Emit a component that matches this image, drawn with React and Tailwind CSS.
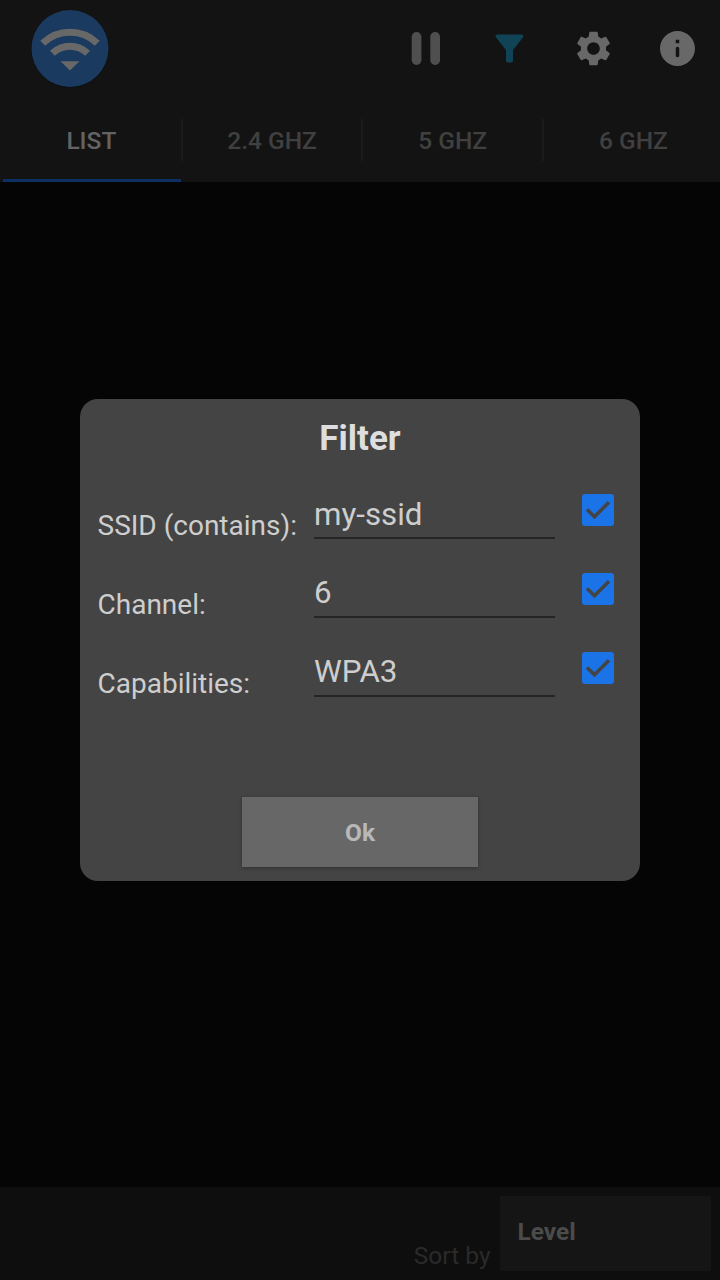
import { MdFilterAlt, MdSettings } from "react-icons/md";

const tabs = ["LIST", "2.4 GHZ", "5 GHZ", "6 GHZ"];
const fields = [
  { label: "SSID (contains):", value: "my-ssid" },
  { label: "Channel:", value: "6" },
  { label: "Capabilities:", value: "WPA3" },
];

function Logo() {
  return (
    <svg className="h-[78px] w-[78px]" viewBox="0 0 78 78">
      <circle cx="39" cy="39.5" r="38.8" fill="#0e1013" />
      <circle cx="39" cy="38.5" r="38.5" fill="#1b3a60" />
      <g fill="none" stroke="#686868" strokeWidth="7">
        <path d="M11.7 33.3a39.5 39.5 0 0 1 54.6 0" />
        <path d="M21.4 43.3a25.5 25.5 0 0 1 35.2 0" />
      </g>
      <path d="M29.5 51.2h19L39 60.5z" fill="#686868" />
    </svg>
  );
}

function Pause() {
  return (
    <svg className="h-[42px] w-[42px]" viewBox="0 0 42 42" fill="#4f4f4f">
      <rect x="6.7" y="4" width="9.7" height="33" rx="4.8" />
      <rect x="25.3" y="4" width="9.7" height="33" rx="4.8" />
    </svg>
  );
}

function Info() {
  return (
    <svg className="h-[42px] w-[42px]" viewBox="0.286 0.286 24 24" fill="#686868">
      <path d="M12 2C6.48 2 2 6.48 2 12s4.48 10 10 10 10-4.48 10-10S17.52 2 12 2zm0 15c-.55 0-1-.45-1-1v-4c0-.55.45-1 1-1s1 .45 1 1v4c0 .55-.45 1-1 1zm1-8h-2V7h2v2z" />
    </svg>
  );
}

function Check() {
  return (
    <svg className="h-8 w-8" viewBox="0 0 32 32">
      <rect width="32" height="32" rx="3" fill="#1b73e8" />
      <path d="M5 15.5l7.5 7.3L27 8.2" fill="none" stroke="#444" strokeWidth="3.6" />
    </svg>
  );
}

export default function App() {
  return (
    <div className="relative flex h-[1280px] w-[720px] flex-col overflow-hidden bg-[#050505] font-[Roboto,sans-serif]">
      <header className="h-[182px] bg-[#131313]">
        <div className="flex h-[98px] items-center justify-between pr-[21px] pl-[31px]">
          <span className="pb-px">
            <Logo />
          </span>
          <div className="flex gap-[42px]">
            <Pause />
            <MdFilterAlt size={42} color="#104355" viewBox="0.286 0.286 24 24" />
            <MdSettings size={42} color="#686868" viewBox="0.286 0.286 24 24" />
            <Info />
          </div>
        </div>
        <nav className="flex h-[84px] items-start pl-[2px] text-[24.5px] font-medium">
          {tabs.map((t, i) => (
            <div key={t} className="flex h-full w-[180.7px] shrink-0 flex-col">
              <div className="flex h-[81px] items-start">
                <span className={i ? "flex-1 pt-[25px] text-center leading-[36px] text-[#404040]" : "flex-1 pt-[25px] text-center leading-[36px] text-[#636363]"}>{t}</span>
                {i < 3 ? <span className="mt-[21px] h-[42px] w-[2px] bg-[#1b1b1b]" /> : <span className="w-[2px]" />}
              </div>
              {i === 0 && <div className="mr-[1.7px] ml-[0.5px] h-[3px] bg-[#0e2f62]" />}
            </div>
          ))}
        </nav>
      </header>
      <main className="flex-1" />
      <footer className="flex h-[93px] items-start justify-end bg-[#0e0e0e] pt-[9px] pr-[9px]">
        <span className="mt-[45px] mr-[9.5px] text-[24.5px] leading-[29px] text-[#2a2a2a]">Sort by</span>
        <div className="flex h-[75px] w-[211px] items-center bg-[#151515] pb-[2px] pl-[17.5px] text-[24.5px] font-bold text-[#4b4b4b]">Level</div>
      </footer>

      <div className="absolute inset-0 flex items-start justify-center pt-[399px]">
        <section className="flex h-[482px] w-[560px] flex-col rounded-[18px] bg-[#444]">
          <h1 className="pt-[19px] text-center text-[35px] leading-[41px] font-bold text-[#dedede]">Filter</h1>
          <div className="mt-[15px] flex flex-col">
            {fields.map((f) => (
              <div key={f.label} className="flex h-[78.75px] items-start">
                <label className="mt-[35.2px] ml-[17.5px] w-[216px] text-[28px] leading-[34px] text-[#cecece]">{f.label}</label>
                <div className="mt-[19.7px] h-[45.6px] w-[241px] border-b-2 border-[#252525] pl-[0.5px] text-[31.3px] leading-[41px] text-[#cecece]">{f.value}</div>
                <span className="mt-[20px] ml-[27.5px]">
                  <Check />
                </span>
              </div>
            ))}
          </div>
          <button className="mx-auto mt-[86.75px] h-[70px] w-[236px] bg-[#676767] pt-[2px] text-[24.5px] font-bold text-[#b8b8b8] shadow-[0_1px_4px_rgba(0,0,0,0.3)]">Ok</button>
        </section>
      </div>
    </div>
  );
}
